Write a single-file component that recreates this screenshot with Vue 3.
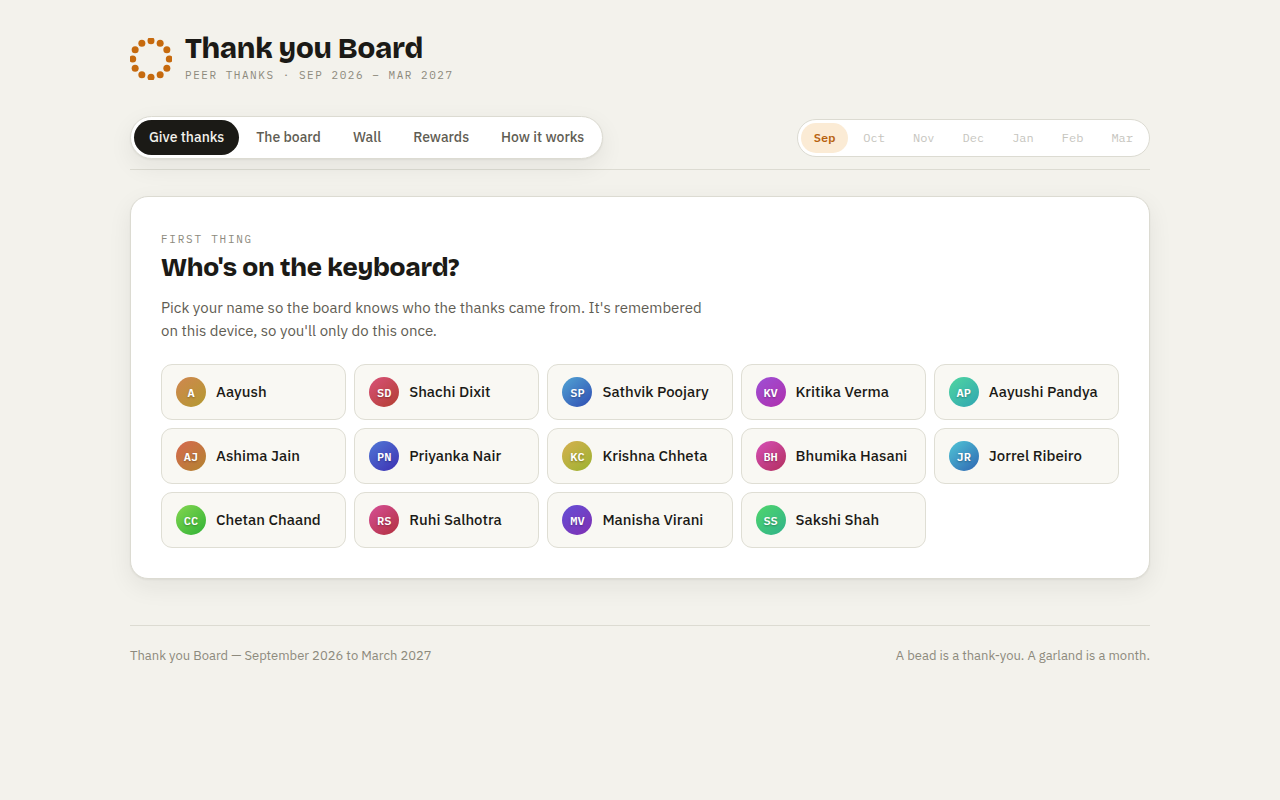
<script setup>
import { ref } from 'vue'

const tabs = ['Give thanks', 'The board', 'Wall', 'Rewards', 'How it works']
const activeTab = ref('Give thanks')

const months = ['Sep', 'Oct', 'Nov', 'Dec', 'Jan', 'Feb', 'Mar']
const currentMonth = 'Sep'

const people = [
  { name: 'Aayush', initials: 'A', from: '#d08650', to: '#b39a30' },
  { name: 'Shachi Dixit', initials: 'SD', from: '#d9527a', to: '#b23e30' },
  { name: 'Sathvik Poojary', initials: 'SP', from: '#52a5d4', to: '#2f4cb2' },
  { name: 'Kritika Verma', initials: 'KV', from: '#9d50d6', to: '#b02fac' },
  { name: 'Aayushi Pandya', initials: 'AP', from: '#50d6a0', to: '#2fa5b2' },
  { name: 'Ashima Jain', initials: 'AJ', from: '#d66850', to: '#b2842f' },
  { name: 'Priyanka Nair', initials: 'PN', from: '#5078d6', to: '#3d2fb2' },
  { name: 'Krishna Chheta', initials: 'KC', from: '#d6b050', to: '#9bb22f' },
  { name: 'Bhumika Hasani', initials: 'BH', from: '#d650b8', to: '#b22f5c' },
  { name: 'Jorrel Ribeiro', initials: 'JR', from: '#50c6d6', to: '#2f66b2' },
  { name: 'Chetan Chaand', initials: 'CC', from: '#84d650', to: '#2fb235' },
  { name: 'Ruhi Salhotra', initials: 'RS', from: '#d65098', to: '#b22f3c' },
  { name: 'Manisha Virani', initials: 'MV', from: '#6450d6', to: '#802fb2' },
  { name: 'Sakshi Shah', initials: 'SS', from: '#50d66c', to: '#2fb28a' },
]

const beads = Array.from({ length: 12 }, (_, i) => {
  const angle = (i * Math.PI) / 6
  return { x: 21 + 18.3 * Math.sin(angle), y: 21 - 18.3 * Math.cos(angle) }
})
</script>

<template>
  <div class="page">
    <header class="brand">
      <svg class="logo" viewBox="0 0 42 42" aria-hidden="true">
        <circle v-for="(bead, i) in beads" :key="i" :cx="bead.x" :cy="bead.y" r="3.5" fill="#c66a0e" />
      </svg>
      <div>
        <h1>Thank you Board</h1>
        <p class="tagline">PEER THANKS · SEP 2026 – MAR 2027</p>
      </div>
    </header>

    <div class="toolbar">
      <nav class="tabs" aria-label="Sections">
        <button
          v-for="tab in tabs"
          :key="tab"
          type="button"
          class="tab"
          :class="{ active: tab === activeTab }"
          @click="activeTab = tab"
        >{{ tab }}</button>
      </nav>
      <div class="months" role="group" aria-label="Month">
        <button
          v-for="month in months"
          :key="month"
          type="button"
          class="month"
          :class="{ active: month === currentMonth }"
          :disabled="month !== currentMonth"
        >{{ month }}</button>
      </div>
    </div>

    <main class="panel">
      <p class="eyebrow">FIRST THING</p>
      <h2>Who's on the keyboard?</h2>
      <p class="intro">Pick your name so the board knows who the thanks came from. It's remembered on this device, so you'll only do this once.</p>
      <div class="people">
        <button v-for="person in people" :key="person.name" type="button" class="person">
          <span
            class="avatar"
            aria-hidden="true"
            :style="{ background: `linear-gradient(140deg, ${person.from}, ${person.to})` }"
          >{{ person.initials }}</span>
          <span>{{ person.name }}</span>
        </button>
      </div>
    </main>

    <footer class="footer">
      <span>Thank you Board — September 2026 to March 2027</span>
      <span>A bead is a thank-you. A garland is a month.</span>
    </footer>
  </div>
</template>

<style>
body {
  margin: 0;
  background: #f3f2ec;
}
</style>

<style scoped>
.page {
  box-sizing: border-box;
  max-width: 1068px;
  margin: 0 auto;
  padding: 32px 24px 64px;
  color: #1b1a16;
  font-family: "IBM Plex Sans", Roboto, "Liberation Sans", sans-serif;
  font-size: 15px;
}
h1, h2, p {
  margin: 0;
}
button {
  font: inherit;
  color: inherit;
  border: 0;
  background: none;
  cursor: pointer;
}
.brand {
  display: flex;
  align-items: center;
  gap: 13px;
}
.logo {
  width: 42px;
  height: 42px;
  margin-top: 2px;
}
h1, h2 {
  font-family: "Bricolage Grotesque", Inter, "Liberation Sans", sans-serif;
  font-weight: 800;
  font-optical-sizing: none;
  letter-spacing: -0.01em;
}
h1 {
  font-size: 29px;
  line-height: 34px;
}
.tagline, .eyebrow {
  font-family: "IBM Plex Mono", "Liberation Mono", monospace;
  font-size: 11px;
  line-height: 18px;
  letter-spacing: 0.14em;
  color: #8d8a7d;
}
.toolbar {
  display: flex;
  justify-content: space-between;
  align-items: center;
  gap: 16px;
  flex-wrap: wrap;
  margin-top: 32px;
  padding-bottom: 10px;
  border-bottom: 1px solid #dcdbd2;
}
.tabs, .months {
  display: flex;
  gap: 2px;
  padding: 3px;
  border: 1px solid #dcdbd2;
  border-radius: 999px;
  background: #fff;
}
.tabs {
  box-shadow: 0 1px 2px rgba(27, 26, 22, 0.06), 0 8px 24px rgba(27, 26, 22, 0.07);
}
.tab {
  padding: 0 15px;
  border-radius: 999px;
  font-size: 14px;
  font-weight: 500;
  line-height: 35px;
  color: #5f5d53;
}
.tab.active {
  background: #1b1a16;
  color: #f3f2ec;
}
.month {
  padding: 0 13px;
  border-radius: 999px;
  font-family: "IBM Plex Mono", "Liberation Mono", monospace;
  font-size: 12px;
  line-height: 30px;
  color: #c6c5be;
  cursor: default;
}
.month.active {
  background: #fbebd5;
  color: #b8620f;
  font-weight: 600;
}
.panel {
  margin-top: 26px;
  padding: 30px;
  border: 1px solid #dcdbd2;
  border-radius: 18px;
  background: #fff;
  box-shadow: 0 1px 2px rgba(27, 26, 22, 0.06), 0 8px 24px rgba(27, 26, 22, 0.07);
}
.eyebrow {
  margin-top: 3px;
  letter-spacing: 0.16em;
}
h2 {
  margin-top: 4px;
  font-size: 26px;
  line-height: 32px;
}
.intro {
  max-width: 560px;
  margin: 12px 0 22px;
  font-size: 15px;
  line-height: 23px;
  color: #5f5d53;
}
.people {
  display: grid;
  grid-template-columns: repeat(auto-fill, minmax(180px, 1fr));
  gap: 8px;
}
.person {
  display: flex;
  align-items: center;
  gap: 10px;
  padding: 12px 14px;
  border: 1px solid #dfded4;
  border-radius: 11px;
  background: #f9f8f3;
  font-weight: 500;
  line-height: 18px;
  text-align: left;
  white-space: nowrap;
}
.avatar {
  flex: none;
  width: 30px;
  height: 30px;
  border-radius: 50%;
  font-family: "IBM Plex Mono", "Liberation Mono", monospace;
  font-size: 12px;
  font-weight: 600;
  line-height: 32px;
  text-align: center;
  color: #fff;
  text-shadow: 0 1px 2px rgba(0, 0, 0, 0.3);
}
.footer {
  display: flex;
  justify-content: space-between;
  flex-wrap: wrap;
  gap: 8px 24px;
  margin-top: 46px;
  padding-top: 20px;
  border-top: 1px solid #dcdbd2;
  font-size: 13px;
  line-height: 20px;
  color: #8d8a7d;
}
</style>
